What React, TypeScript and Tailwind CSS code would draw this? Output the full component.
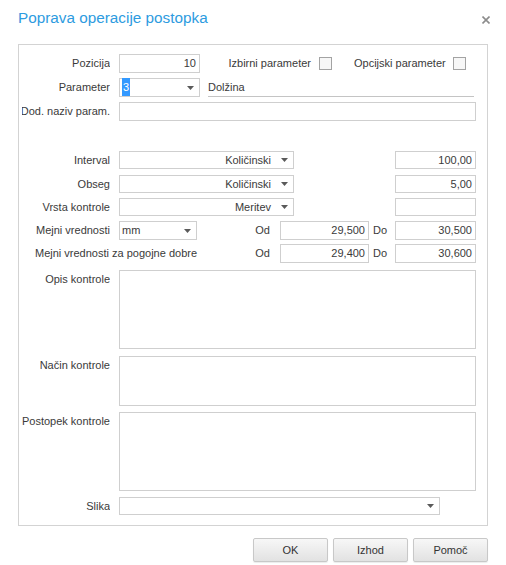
import type { ReactNode } from 'react'

const Arrow = () => (
    <svg width="7" height="4" viewBox="0 0 7 4" className="shrink-0">
        <path d="M0 0 H7 L3.5 4 Z" fill="#5a5a5a" />
    </svg>
)

function Field({ w, children, className = '' }: { w: string; children?: ReactNode; className?: string }) {
    return (
        <div className={`${w} h-full border border-[#cfcfcf] bg-white flex items-center justify-end pr-[3px] ${className}`}>
            {children}
        </div>
    )
}

function Combo({ w, value, align = 'right' }: { w: string; value?: ReactNode; align?: 'left' | 'right' }) {
    return (
        <div className={`${w} h-full border border-[#cfcfcf] bg-white flex items-center pl-[2px] pr-[5px]`}>
            <div className={`flex-1 whitespace-nowrap ${align === 'right' ? 'text-right pr-[10px]' : 'text-left'}`}>{value}</div>
            <Arrow />
        </div>
    )
}

function Label({ children, top = false }: { children: ReactNode; top?: boolean }) {
    return (
        <div className={`ml-[3px] w-[88px] mr-[9px] shrink-0 overflow-hidden flex justify-end whitespace-nowrap ${top ? 'self-start pt-[4px]' : ''}`}>
            <span>{children}</span>
        </div>
    )
}

function Limits({ from, to }: { from: string; to: string }) {
    return (
        <div className="ml-auto h-full flex items-center">
            <span>Od</span>
            <Field w="w-[89px]" className="ml-[10px]">{from}</Field>
            <span className="w-[26px] pl-[4px]">Do</span>
            <Field w="w-[81px]">{to}</Field>
        </div>
    )
}

const Checkbox = () => <div className="w-[13px] h-[13px] border border-[#a3a3a3] bg-[#f7f7f7] shrink-0" />

export default function App() {
    return (
        <div className="w-[506px] h-[565px] bg-white text-[11px] text-[#3a3a3a] font-['Liberation_Sans',Arial,sans-serif] leading-none">
            {/* header */}
            <div className="h-[44px] flex items-start justify-between pl-[18px] pr-[16px] pt-[8px]">
                <h1 className="text-[15.3px] text-[#2d9be0] leading-[20px]">Poprava operacije postopka</h1>
                <svg width="8" height="8" viewBox="0 0 8 8" className="mt-[8px]">
                    <path d="M0.5 0.5 L7.5 7.5 M7.5 0.5 L0.5 7.5" stroke="#8c8c8c" strokeWidth="1.6" />
                </svg>
            </div>

            {/* form panel */}
            <div className="mx-[18px] h-[482px] border border-[#d3d3d3] pt-[9px] pr-[11px] flex flex-col">
                <div className="h-[19px] flex items-center">
                    <Label>Pozicija</Label>
                    <Field w="w-[81px]">10</Field>
                    <div className="ml-[22px] flex items-center">
                        <span className="w-[97px] pr-[8px] text-right whitespace-nowrap">Izbirni parameter</span>
                        <Checkbox />
                    </div>
                    <div className="ml-[22px] flex items-center">
                        <span className="w-[99px] pr-[8px] text-right whitespace-nowrap">Opcijski parameter</span>
                        <Checkbox />
                    </div>
                </div>

                <div className="mt-[5px] h-[19px] flex items-center">
                    <Label>Parameter</Label>
                    <Combo
                        w="w-[81px]"
                        align="left"
                        value={<span className="bg-[#3399ff] text-white px-[1px] py-[3px]">3</span>}
                    />
                    <div className="ml-[8px] w-[266px] h-full border-b border-[#c4c4c4] flex items-center">Dolžina</div>
                </div>

                <div className="mt-[5px] h-[19px] flex items-center">
                    <Label>Dod. naziv param.</Label>
                    <Field w="flex-1" />
                </div>

                <div className="mt-[30px] h-[18px] flex items-center">
                    <Label>Interval</Label>
                    <Combo w="w-[175px]" value="Količinski" />
                    <Field w="w-[81px]" className="ml-auto">100,00</Field>
                </div>

                <div className="mt-[6px] h-[18px] flex items-center">
                    <Label>Obseg</Label>
                    <Combo w="w-[175px]" value="Količinski" />
                    <Field w="w-[81px]" className="ml-auto">5,00</Field>
                </div>

                <div className="mt-[5px] h-[18px] flex items-center">
                    <Label>Vrsta kontrole</Label>
                    <Combo w="w-[175px]" value="Meritev" />
                    <Field w="w-[81px]" className="ml-auto" />
                </div>

                <div className="mt-[5px] h-[19px] flex items-center">
                    <Label>Mejni vrednosti</Label>
                    <Combo w="w-[78px]" align="left" value="mm" />
                    <Limits from="29,500" to="30,500" />
                </div>

                <div className="mt-[4px] h-[19px] flex items-center">
                    <span className="ml-[16px] whitespace-nowrap">Mejni vrednosti za pogojne dobre</span>
                    <Limits from="29,400" to="30,600" />
                </div>

                <div className="mt-[7px] h-[79px] flex">
                    <Label top>Opis kontrole</Label>
                    <Field w="flex-1" />
                </div>

                <div className="mt-[7px] h-[50px] flex">
                    <Label top>Način kontrole</Label>
                    <Field w="flex-1" />
                </div>

                <div className="mt-[6px] h-[79px] flex">
                    <Label top>Postopek kontrole</Label>
                    <Field w="flex-1" />
                </div>

                <div className="mt-[6px] h-[18px] flex items-center">
                    <Label>Slika</Label>
                    <Combo w="w-[321px]" value="" />
                </div>
            </div>

            {/* dialog buttons */}
            <div className="mt-[12px] pr-[18px] flex justify-end gap-[5px]">
                {['OK', 'Izhod', 'Pomoč'].map((b) => (
                    <button
                        key={b}
                        className="w-[75px] h-[24px] rounded-[2px] border border-[#c8c8c8] bg-gradient-to-b from-[#f7f7f7] to-[#e2e2e2] text-[#333] shadow-[0_1px_1px_rgba(0,0,0,0.08)]"
                    >
                        {b}
                    </button>
                ))}
            </div>
        </div>
    )
}
